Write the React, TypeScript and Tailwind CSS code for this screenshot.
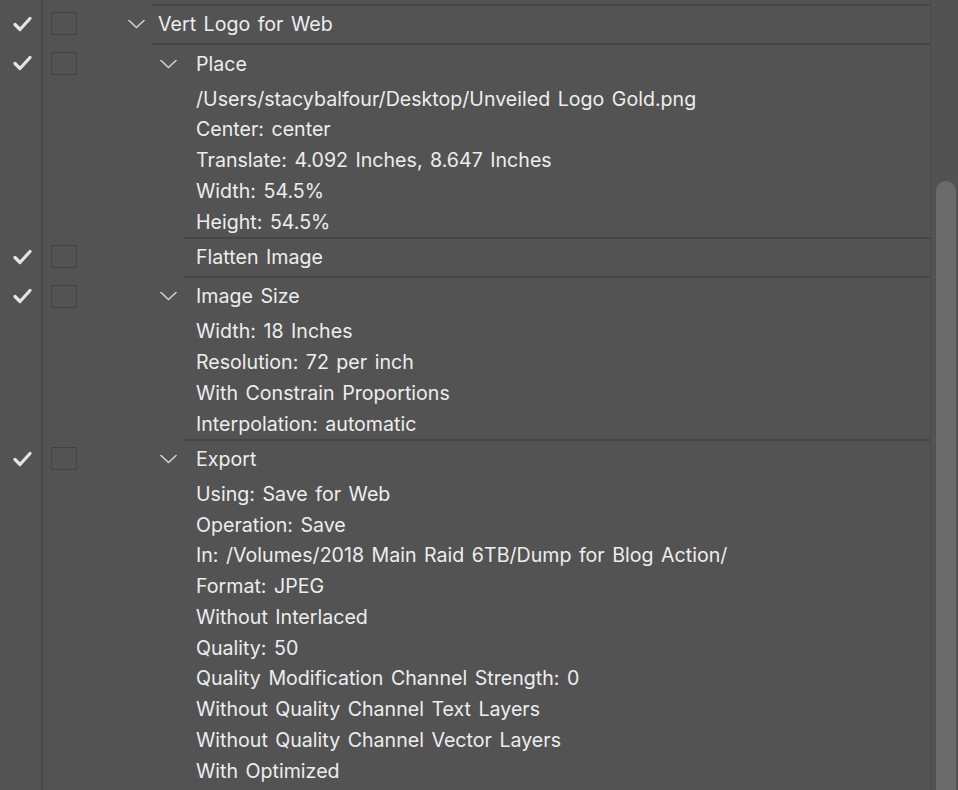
import { ReactNode } from 'react';

type Step = {
  title: string;
  expandable: boolean;
  details?: string[];
};

const steps: Step[] = [
  { title: 'Place', expandable: true, details: [
    '/Users/stacybalfour/Desktop/Unveiled Logo Gold.png',
    'Center: center',
    'Translate: 4.092 Inches, 8.647 Inches',
    'Width: 54.5%',
    'Height: 54.5%',
  ] },
  { title: 'Flatten Image', expandable: false },
  { title: 'Image Size', expandable: true, details: [
    'Width: 18 Inches',
    'Resolution: 72 per inch',
    'With Constrain Proportions',
    'Interpolation: automatic',
  ] },
  { title: 'Export', expandable: true, details: [
    'Using: Save for Web',
    'Operation: Save',
    'In: /Volumes/2018 Main Raid 6TB/Dump for Blog Action/',
    'Format: JPEG',
    'Without Interlaced',
    'Quality: 50',
    'Quality Modification Channel Strength: 0',
    'Without Quality Channel Text Layers',
    'Without Quality Channel Vector Layers',
    'With Optimized',
  ] },
];

function Check() {
  return (
    <svg width="19" height="16" viewBox="0 0 19 16" fill="none">
      <path d="M2 8.5 L7 13.5 L17 2.5" stroke="#e4e4e4" strokeWidth="3.2" strokeLinecap="round" strokeLinejoin="round" />
    </svg>
  );
}

function Chevron() {
  return (
    <svg width="17" height="10" viewBox="0 0 17 10" fill="none">
      <path d="M1 1.5 L8.5 8.5 L16 1.5" stroke="#d2d2d2" strokeWidth="1.6" strokeLinecap="round" strokeLinejoin="round" />
    </svg>
  );
}

// header row of an action / step, with the check + dialog toggle columns on the left
function HeaderRow({ children, indent, chevronX, line, bottomLine }: {
  children: ReactNode;
  indent: string;
  chevronX?: string;
  line?: string;
  bottomLine?: boolean;
}) {
  return (
    <div className="flex h-[39.5px] items-center">
      <div className="flex w-[42px] shrink-0 items-center justify-center pl-[3px]">
        <Check />
      </div>
      <div className="flex w-[46px] shrink-0 items-center pl-[9px]">
        <div className="h-[23px] w-[26px] border border-[#434343]" />
      </div>
      <div className="relative flex h-full flex-1 items-center">
        {line && <div className={`absolute right-0 top-0 h-[2px] bg-[#464646] ${line}`} />}
        {bottomLine && <div className="absolute bottom-[-1px] left-[64px] right-0 h-[2px] bg-[#464646]" />}
        {chevronX && <div className={`absolute ${chevronX} top-[15px]`}><Chevron /></div>}
        <span className={`${indent} pt-[2px]`}>{children}</span>
      </div>
    </div>
  );
}

export default function App() {
  return (
    <div
      className="flex h-[790px] w-[958px] overflow-hidden bg-[#535353] text-[19.6px] text-[#ededed] [word-spacing:2px]"
      style={{ fontFamily: 'Inter, "Noto Sans", sans-serif' }}
    >
      <div className="relative flex-1">
        {/* left gutter divider */}
        <div className="absolute bottom-0 left-[41px] top-0 w-[2px] bg-[#474747]" />
        <div className="h-[4px]" />
        <HeaderRow indent="pl-[70px]" chevronX="left-[40px]" line="left-[64px]" bottomLine>
          Vert Logo for Web
        </HeaderRow>
        {steps.map((step, i) => (
          <div key={step.title}>
            <HeaderRow
              indent="pl-[108px]"
              chevronX={step.expandable ? 'left-[72px]' : undefined}
              line={i === 0 ? undefined : 'left-[96px]'}
            >
              {step.title}
            </HeaderRow>
            {step.details?.map((d) => (
              <div key={d} className="flex h-[30.75px] items-center pl-[196px] pt-[2px] whitespace-nowrap">
                {d}
              </div>
            ))}
          </div>
        ))}
      </div>
      {/* scrollbar */}
      <div className="flex w-[28px] flex-col border-l border-[#4a4a4a] bg-[#525252] pl-[5px] pr-[2px]">
        <div className="h-[181px]" />
        <div className="w-[20px] flex-1 rounded-t-full bg-[#6b6b6b]" />
      </div>
    </div>
  );
}
